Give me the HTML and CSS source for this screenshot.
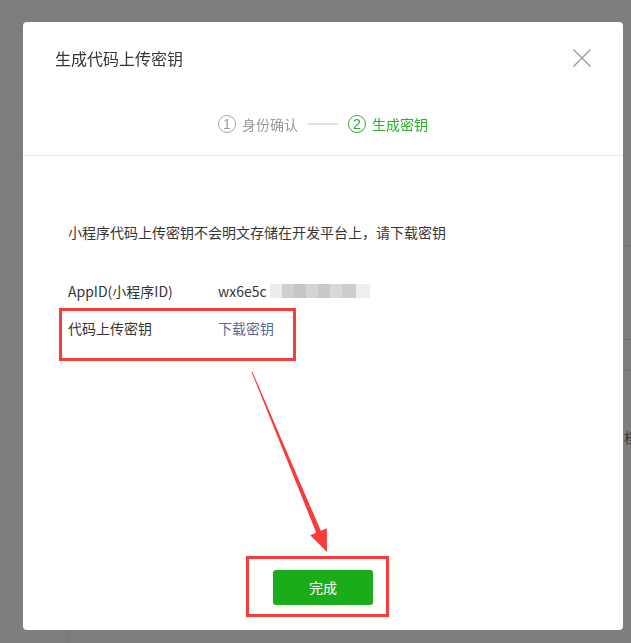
FILE: index.html
```html
<!DOCTYPE html>
<html lang="zh-CN">
<head>
    <meta charset="UTF-8">
    <meta name="viewport" content="width=device-width, initial-scale=1.0">
    <title>生成代码上传密钥</title>
    <link rel="stylesheet" href="styles.css">
</head>
<body>
    <!-- page under the mask -->
    <div class="under">
        <div class="under-side"></div>
        <div class="under-main">
            <div class="under-row under-row-a"></div>
            <div class="under-row under-row-b"></div>
            <div class="under-row under-row-c"></div>
            <div class="under-text"><span>档</span></div>
        </div>
    </div>

    <div class="mask">
        <div class="dialog">
            <div class="dialog-hd">
                <h3 class="dialog-title">生成代码上传密钥</h3>
                <a class="dialog-close" href="#" aria-label="关闭">
                    <svg width="18" height="18" viewBox="0 0 18 18">
                        <path d="M0.5 0.5 L17.5 17.5 M17.5 0.5 L0.5 17.5" stroke="#9a9a9a" stroke-width="1.4" fill="none"/>
                    </svg>
                </a>
                <div class="steps">
                    <div class="step">
                        <span class="step-num">1</span>
                        <span class="step-label">身份确认</span>
                    </div>
                    <span class="step-line"></span>
                    <div class="step step-current">
                        <span class="step-num">2</span>
                        <span class="step-label">生成密钥</span>
                    </div>
                </div>
            </div>

            <div class="dialog-bd">
                <p class="tips">小程序代码上传密钥不会明文存储在开发平台上，请下载密钥</p>
                <div class="info-row">
                    <span class="info-label">AppID(小程序ID)</span>
                    <span class="info-value">wx6e5c<span class="mosaic"></span></span>
                </div>
                <div class="info-row">
                    <span class="info-label">代码上传密钥</span>
                    <a class="info-link" href="#">下载密钥</a>
                </div>
            </div>

            <div class="dialog-ft">
                <a class="btn-primary" href="#">完成</a>
            </div>

            <!-- screenshot annotations -->
            <div class="mark mark-key"></div>
            <div class="mark mark-btn"></div>
            <svg class="mark-arrow" width="600" height="608" viewBox="23 22 600 608">
                <polygon points="252.4,371.8 320.8,530.7 326.8,528.2 327,552 310.2,535.2 316.2,532.7 251.6,372.2" fill="#f73c3c"/>
            </svg>
        </div>
    </div>
</body>
</html>
```

FILE: styles.css
```css
* {
    box-sizing: border-box;
    margin: 0;
    padding: 0;
}

body {
    font-family: "Noto Sans CJK SC", "Liberation Sans", sans-serif;
    font-size: 14px;
    color: #353535;
    background: #fff;
    overflow: hidden;
}

a {
    text-decoration: none;
}

/* underlying page */
.under {
    display: flex;
    height: 643px;
    background: #fdfdfd;
}

.under-side {
    align-self: flex-end;
    width: 69px;
    height: 40px;
    border-right: 1px solid #e8e8e8;
}

.under-main {
    flex: 1;
}

.under-row {
    border-bottom: 1px solid #e4e4e4;
}

.under-row-a {
    height: 246px;
}

.under-row-b {
    height: 94px;
}

.under-row-c {
    height: 31px;
}

.under-text {
    margin-top: 56px;
    text-align: right;
    color: #777;
    line-height: 20px;
}

.under-text span {
    margin-right: -7px;
}

.mask {
    position: fixed;
    inset: 0;
    background: rgba(0, 0, 0, 0.5);
}

/* dialog */
.dialog {
    position: relative;
    display: flex;
    flex-direction: column;
    width: 600px;
    height: 608px;
    margin: 22px 0 0 23px;
    background: #fff;
    border-radius: 4px;
}

.dialog-hd {
    position: relative;
    padding: 24px 32px 19px;
    border-bottom: 1px solid #e7e7e7;
}

.dialog-title {
    font-size: 16px;
    font-weight: normal;
    line-height: 24px;
    color: #353535;
}

.dialog-close {
    position: absolute;
    top: 27px;
    right: 32px;
    width: 18px;
    height: 18px;
}

.dialog-close svg {
    display: block;
}

.steps {
    display: flex;
    align-items: center;
    justify-content: center;
    margin-top: 42px;
    height: 24px;
}

.step {
    display: flex;
    align-items: center;
    gap: 6px;
    color: #9a9a9a;
}

.step-num {
    display: flex;
    align-items: center;
    justify-content: center;
    width: 18px;
    height: 18px;
    border: 1px solid #a6a6a6;
    border-radius: 50%;
    font-family: "Liberation Sans", sans-serif;
    font-size: 14px;
    line-height: 1;
}

.step-label {
    line-height: 20px;
}

.step-current {
    color: #2aae29;
}

.step-current .step-num {
    border-color: #2aae29;
}

.step-line {
    width: 30px;
    height: 2px;
    margin: 0 10px;
    background: #dfe3e8;
}

.dialog-bd {
    padding: 66px 45px 0;
}

.tips {
    line-height: 20px;
    margin-bottom: 39px;
}

.info-row {
    display: flex;
    align-items: center;
    line-height: 20px;
    margin-bottom: 17px;
}

.info-label {
    width: 150px;
}

.info-value {
    display: flex;
    align-items: center;
}

.mosaic {
    display: inline-block;
    width: 100px;
    height: 14px;
    margin-left: 3px;
    background: linear-gradient(to right,
        #ececec 0 12px,
        #cfcfcf 12px 24px,
        #c6c6c6 24px 36px,
        #d3d3d3 36px 48px,
        #c9c9c9 48px 60px,
        #d8d8d8 60px 72px,
        #cdcdcd 72px 86px,
        #eeeeee 86px 100px);
}

.info-link {
    color: #576b95;
}

.dialog-ft {
    margin-top: auto;
    display: flex;
    justify-content: center;
    padding-bottom: 25px;
}

.btn-primary {
    display: block;
    width: 100px;
    height: 35px;
    line-height: 35px;
    text-align: center;
    color: #fff;
    background: #1aad19;
    border-radius: 3px;
}

/* red annotations over the dialog */
.mark {
    position: absolute;
    border: 3px solid #f73c3c;
}

.mark-key {
    left: 36px;
    top: 286px;
    width: 237px;
    height: 53px;
}

.mark-btn {
    left: 223px;
    top: 534px;
    width: 143px;
    height: 61px;
}

.mark-arrow {
    position: absolute;
    left: 0;
    top: 0;
    pointer-events: none;
}
```
